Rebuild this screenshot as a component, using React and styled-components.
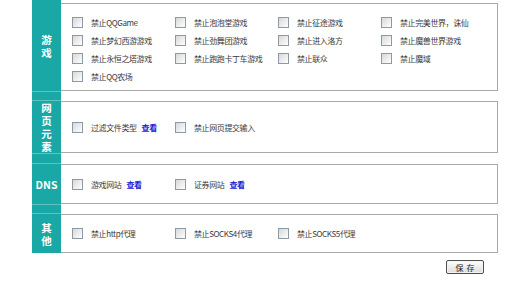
import React from 'react';
import styled, { createGlobalStyle } from 'styled-components';

const GlobalStyle = createGlobalStyle`
    body {
        margin: 0;
        background: #ffffff;
        font-family: "Noto Sans CJK SC", "DejaVu Sans", sans-serif;
    }
`
const Page = styled.div`
    width: 466px;
    margin-left: 32px;
`
const Row = styled.div`
    display: flex;
    height: ${props => props.h}px;
`
const Label = styled.div`
    width: 29px;
    flex-shrink: 0;
    background: #19a8a5;
    color: #ffffff;
    font-size: 10.5px;
    font-weight: bold;
    line-height: 13px;
    display: flex;
    align-items: center;
    justify-content: center;
    text-align: center;
    box-sizing: border-box;
    border-top: ${props => props.lined ? '1px solid #5ec3c1' : 'none'};
    border-bottom: ${props => props.lined ? '1px solid #5ec3c1' : 'none'};
`
const Box = styled.div`
    flex: 1;
    margin-top: ${props => props.top || 0}px;
    border: 1px solid #a9a9a9;
    border-left: none;
    box-sizing: border-box;
    padding: ${props => props.pad || '0 0 0 11px'};
    display: flex;
    flex-direction: column;
    justify-content: ${props => props.center ? 'center' : 'flex-start'};
`
const Grid = styled.div`
    display: grid;
    grid-template-columns: repeat(4, 103px);
    grid-auto-rows: 18px;
`
const Item = styled.div`
    display: flex;
    align-items: center;
    font-size: 8px;
    letter-spacing: -0.4px;
    color: #3a3a3a;
    white-space: nowrap;
`
const Check = styled.span`
    width: 9px;
    height: 9px;
    border: 1px solid #8d9aa5;
    background: linear-gradient(135deg, #d8d8d8, #ffffff);
    margin-right: 8px;
    flex-shrink: 0;
`
const Link = styled.span`
    color: #2121d6;
    font-weight: bold;
    margin-left: 5px;
`
const Footer = styled.div`
    display: flex;
    justify-content: flex-end;
    padding: 7px 14px 0 0;
`
const SaveButton = styled.button`
    width: 38px;
    height: 14px;
    padding: 0;
    border: 1px solid #4f4f4f;
    border-radius: 2px;
    background: linear-gradient(#ffffff, #dcdcdc);
    box-shadow: inset 0 0 0 1px #f4f4f4;
    font-family: "Noto Sans CJK SC", sans-serif;
    font-size: 8px;
    line-height: 11px;
    color: #222222;
    letter-spacing: 3px;
    text-indent: 3px;
`

const games = [
    '禁止QQGame', '禁止泡泡堂游戏', '禁止征途游戏', '禁止完美世界，诛仙',
    '禁止梦幻西游游戏', '禁止劲舞团游戏', '禁止进入洛方', '禁止魔兽世界游戏',
    '禁止永恒之塔游戏', '禁止跑跑卡丁车游戏', '禁止联众', '禁止魔域',
    '禁止QQ农场',
]

const Opt = ({ text, link }) => (
    <Item>
        <Check />
        {text}
        {link && <Link>查看</Link>}
    </Item>
)

const Vertical = ({ chars }) => (
    <div>{chars.split('').map((c, i) => <div key={i}>{c}</div>)}</div>
)

export default function App() {
    return (
        <Page>
            <GlobalStyle />
            <Row h={91}>
                <Label><Vertical chars="游戏" /></Label>
                <Box top={3} pad="9px 0 0 11px">
                    <Grid>
                        {games.map(g => <Opt key={g} text={g} />)}
                    </Grid>
                </Box>
            </Row>
            <Row h={10}><Label lined /></Row>
            <Row h={52}>
                <Label><Vertical chars="网页元素" /></Label>
                <Box center>
                    <Grid>
                        <Opt text="过滤文件类型" link />
                        <Opt text="禁止网页提交输入" />
                    </Grid>
                </Box>
            </Row>
            <Row h={11}><Label lined /></Row>
            <Row h={40}>
                <Label>DNS</Label>
                <Box center>
                    <Grid>
                        <Opt text="游戏网站" link />
                        <Opt text="证券网站" link />
                    </Grid>
                </Box>
            </Row>
            <Row h={10}><Label lined /></Row>
            <Row h={39}>
                <Label><Vertical chars="其他" /></Label>
                <Box center>
                    <Grid>
                        <Opt text="禁止http代理" />
                        <Opt text="禁止SOCKS4代理" />
                        <Opt text="禁止SOCKS5代理" />
                    </Grid>
                </Box>
            </Row>
            <Footer>
                <SaveButton>保存</SaveButton>
            </Footer>
        </Page>
    );
}
